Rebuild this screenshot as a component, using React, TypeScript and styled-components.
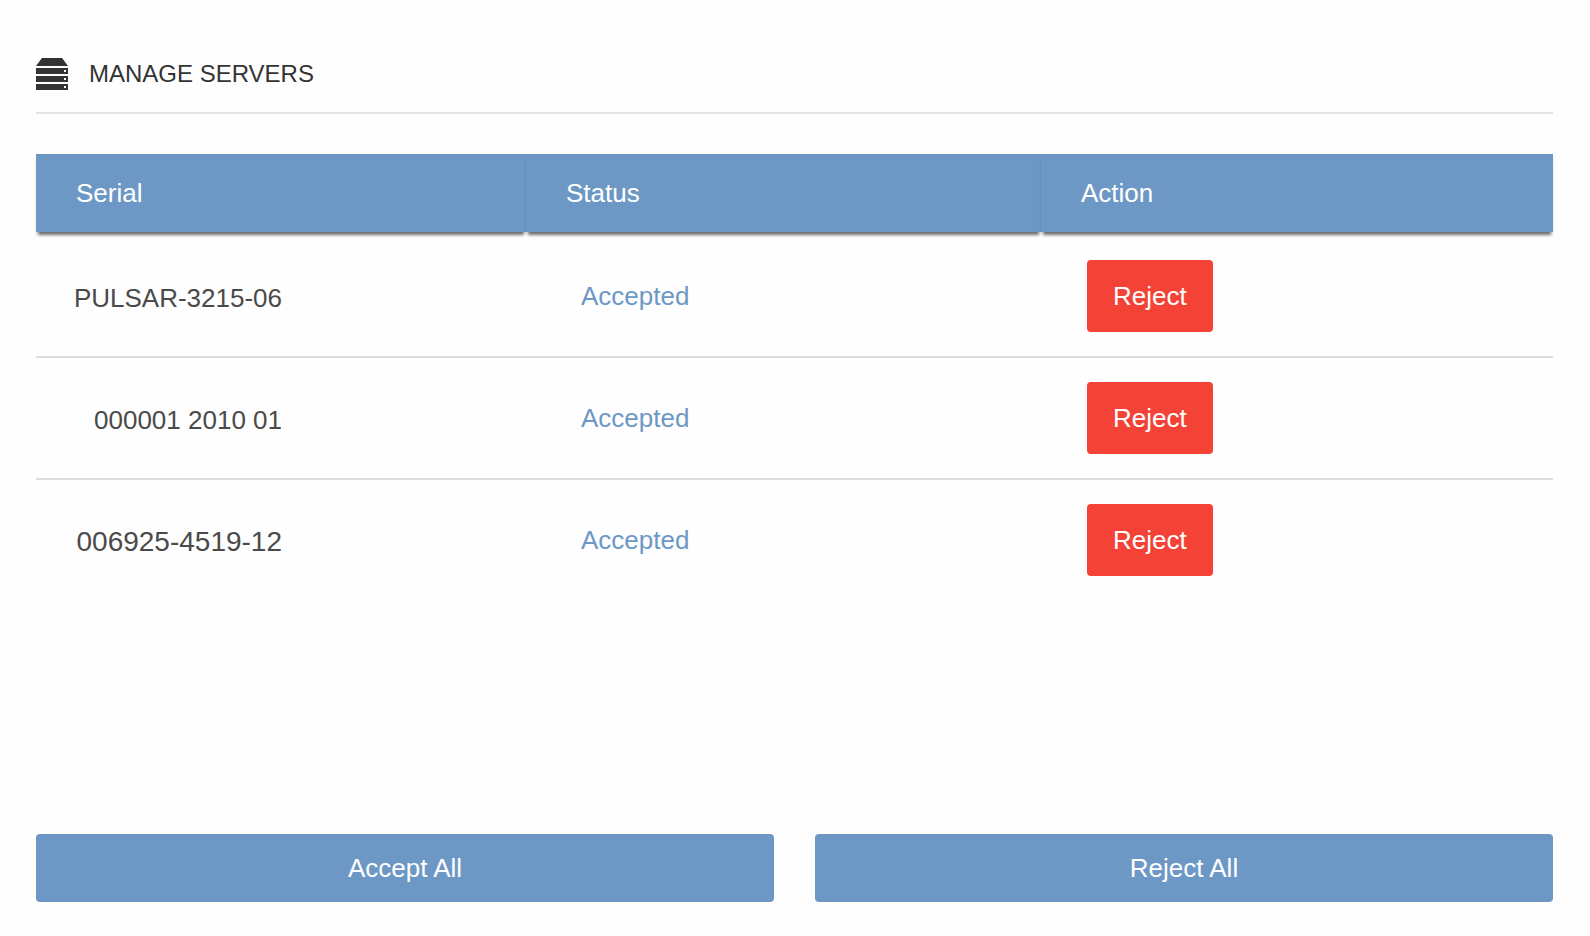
import React from "react";
import styled, { createGlobalStyle } from "styled-components";

const blue = "#6d98c6";

const GlobalStyle = createGlobalStyle`
  *, *::before, *::after { box-sizing: border-box; }
  body {
    margin: 0;
    background: #fefefe;
    color: #333;
    font-family: "Liberation Sans", Arial, Helvetica, sans-serif;
    font-size: 26px;
    line-height: 30px;
  }
`;

const Page = styled.main`
  display: flex;
  flex-direction: column;
  min-height: 100vh;
  padding: 36px 37px 34px 36px;
`;

const Header = styled.header`
  display: flex;
  align-items: center;
  gap: 21px;
  height: 78px;
  margin-bottom: 40px;
  border-bottom: 2px solid #e3e3e3;
`;

const Title = styled.h1`
  margin: 0;
  font-size: 24px;
  font-weight: 400;
  text-transform: uppercase;
`;

const Table = styled.table`
  width: 100%;
  table-layout: fixed;
  border-collapse: separate;
  border-spacing: 0;
`;

const HeadCell = styled.th<{ $width?: string }>`
  width: ${(p) => p.$width ?? "auto"};
  height: 78px;
  padding: 0 40px;
  background: ${blue};
  color: #fff;
  font-weight: 400;
  text-align: left;
  box-shadow: 0 5px 3px -2px rgba(0, 0, 0, 0.55), 0 2px 3px rgba(0, 0, 0, 0.06);
`;

const Cell = styled.td<{ $indent: number }>`
  padding: 24px 0 24px ${(p) => p.$indent}px;
  border-bottom: 2px solid #dcdcdc;
  vertical-align: middle;

  tr:first-child > & { padding-top: 28px; }
  tr:last-child > & { border-bottom-color: transparent; }
`;

const Serial = styled.span<{ $large?: boolean }>`
  display: block;
  width: 210px;
  padding-top: 4px;
  font-size: ${(p) => (p.$large ? 28 : 26)}px;
  color: #4a4a4a;
  text-align: right;
  white-space: nowrap;
`;

const Status = styled.span`
  color: ${blue};
`;

const Button = styled.button`
  border: 0;
  border-radius: 4px;
  background: ${blue};
  color: #fff;
  font: inherit;
  cursor: pointer;
`;

const RejectButton = styled(Button)`
  display: block;
  height: 72px;
  padding: 0 26px;
  background: #f44336;
`;

const Footer = styled.footer`
  display: grid;
  grid-template-columns: 1fr 1fr;
  gap: 41px;
  margin-top: auto;
  padding-top: 40px;
`;

const WideButton = styled(Button)`
  height: 68px;
`;

const ServerIcon = () => (
  <svg width="32" height="32" viewBox="0 0 32 32" fill="#333" aria-hidden="true">
    <path d="M6 0h20l6 8H0z" />
    <path fillRule="evenodd" d="M0 10h32v6H0zM28 12h2v2h-2z" />
    <path fillRule="evenodd" d="M0 18h32v6H0zM28 20h2v2h-2z" />
    <path fillRule="evenodd" d="M0 26h32v6H0zM28 28h2v2h-2z" />
  </svg>
);

const servers = [
  { serial: "PULSAR-3215-06", status: "Accepted" },
  { serial: "000001 2010 01", status: "Accepted" },
  { serial: "006925-4519-12", status: "Accepted", large: true },
];

export default function App() {
  return (
    <>
      <GlobalStyle />
      <Page>
        <Header>
          <ServerIcon />
          <Title>Manage servers</Title>
        </Header>
        <Table>
          <thead>
            <tr>
              <HeadCell scope="col" $width="32.3%">Serial</HeadCell>
              <HeadCell scope="col" $width="33.95%">Status</HeadCell>
              <HeadCell scope="col">Action</HeadCell>
            </tr>
          </thead>
          <tbody>
            {servers.map((s) => (
              <tr key={s.serial}>
                <Cell $indent={36}>
                  <Serial $large={s.large}>{s.serial}</Serial>
                </Cell>
                <Cell $indent={55}>
                  <Status>{s.status}</Status>
                </Cell>
                <Cell $indent={46}>
                  <RejectButton type="button">Reject</RejectButton>
                </Cell>
              </tr>
            ))}
          </tbody>
        </Table>
        <Footer>
          <WideButton type="button">Accept All</WideButton>
          <WideButton type="button">Reject All</WideButton>
        </Footer>
      </Page>
    </>
  );
}
